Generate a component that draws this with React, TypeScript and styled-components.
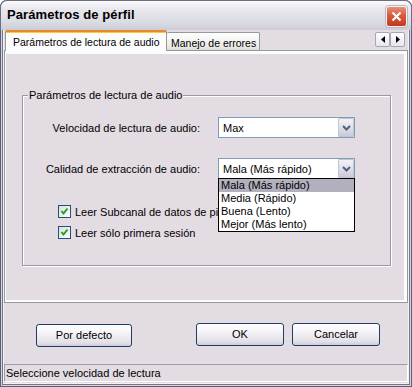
import React from "react";
import styled, { createGlobalStyle } from "styled-components";

const Global = createGlobalStyle`
  html, body { margin: 0; padding: 0; background: #ffffff; }
  body { font-family: "Liberation Sans", Arial, sans-serif; font-size: 11px; color: #000; }
  * { box-sizing: border-box; }
`;

const BG = "#e3dce3";

const Window = styled.div`
  width: 412px;
  height: 387px;
  display: flex;
  flex-direction: column;
  background: ${BG};
  border-radius: 7px 7px 0 0;
  overflow: hidden;
  box-shadow:
    inset 1px 0 #5c5e76, inset -1px 0 #5c5e76, inset 0 -1px #5c5e76,
    inset 2px 0 #d4d4de, inset -2px 0 #d4d4de, inset 0 -2px #d4d4de,
    inset 3px 0 #74768c, inset -3px 0 #74768c, inset 0 -3px #74768c,
    inset 4px 0 #f4f2f6, inset -4px 0 #f4f2f6, inset 0 -4px #f4f2f6;
`;

const TitleBar = styled.div`
  height: 30px;
  flex: none;
  display: flex;
  align-items: flex-start;
  justify-content: space-between;
  padding: 0 4px 0 6px;
  border: 1px solid #6b6d85;
  border-bottom: none;
  border-radius: 7px 7px 0 0;
  background: linear-gradient(#fbfbfd 0%, #e9e9ef 25%, #dcdce4 70%, #cdcdd8 100%);
`;

const Title = styled.div`
  font-weight: bold;
  font-size: 13px;
  line-height: 16px;
  margin-top: 6px;
  color: #000;
  letter-spacing: 0.1px;
`;

const CloseButton = styled.div`
  width: 21px;
  height: 21px;
  margin-top: 5px;
  border: 1px solid #f4f4f4;
  border-radius: 3px;
  background: linear-gradient(#e9907a 0%, #d75a40 45%, #c4381d 100%);
  box-shadow: 0 0 0 1px #b9b9c6;
  display: flex;
  align-items: center;
  justify-content: center;
`;

const Content = styled.div`
  flex: 1;
  display: flex;
  flex-direction: column;
  padding: 0 4px 5px 4px;
`;

const TabStrip = styled.div`
  height: 21px;
  margin-bottom: -1px;
  display: flex;
  align-items: flex-start;
  padding-left: 1px;
  position: relative;
  z-index: 1;
`;

const Tab = styled.div<{ $active?: boolean }>`
  height: ${(p) => (p.$active ? "21px" : "18px")};
  margin-top: ${(p) => (p.$active ? "0" : "2px")};
  width: ${(p) => (p.$active ? "162px" : "93px")};
  display: flex;
  align-items: center;
  padding-left: ${(p) => (p.$active ? "7px" : "4px")};
  padding-top: ${(p) => (p.$active ? "0" : "2px")};
  font-size: 10.5px;
  border: 1px solid #919b9c;
  border-bottom: none;
  border-left: ${(p) => (p.$active ? "1px solid #919b9c" : "none")};
  border-top: ${(p) => (p.$active ? "2px solid #e68b2c" : "1px solid #919b9c")};
  border-radius: 2px 2px 0 0;
  background: ${(p) =>
    p.$active ? "#fcfcfe" : "linear-gradient(#ffffff, #ecebe6 80%, #dcdad6)"};
  box-shadow: ${(p) => (p.$active ? "inset 0 1px #ffc73c" : "none")};
  white-space: nowrap;
  overflow: hidden;
`;

const Spacer = styled.div`
  flex: 1;
`;

const ScrollButtons = styled.div`
  display: flex;
  margin-top: 2px;
  margin-right: 3px;
`;

const ScrollButton = styled.div`
  width: 15px;
  height: 15px;
  border: 1px solid #a6a6b6;
  border-radius: 2px;
  background: linear-gradient(#ffffff, #e6e6ee);
  display: flex;
  align-items: center;
  justify-content: center;
`;

const Panel = styled.div`
  height: 253px;
  flex: none;
  border: 1px solid #919b9c;
  box-shadow: inset 1px 0 #fcfcfe, inset 0 3px #fcfcfe, inset -3px 0 #fcfcfe,
    inset 0 -2px #fcfcfe;
  padding: 44px 0 0 17px;
`;

const GroupBox = styled.div`
  width: 369px;
  height: 171px;
  border: 1px solid #9a9aa4;
  box-shadow: inset 1px 1px #ffffff, 1px 1px #ffffff;
  display: flex;
  flex-direction: column;
`;

const Legend = styled.div`
  margin: -7px 0 0 5px;
  padding: 0 1px;
  line-height: 13px;
  background: ${BG};
  width: fit-content;
`;

const FormGrid = styled.div`
  margin-top: 15px;
  display: grid;
  grid-template-columns: 177px 137px;
  grid-auto-rows: 21px;
  column-gap: 18px;
  row-gap: 20px;
  align-items: center;
`;

const Label = styled.div`
  text-align: right;
  white-space: nowrap;
`;

const ComboWrap = styled.div`
  position: relative;
  height: 21px;
`;

const Combo = styled.div`
  height: 21px;
  border: 1px solid #7f9db9;
  background: #ffffff;
  display: flex;
  align-items: center;
  padding-left: 4px;
  white-space: nowrap;
`;

const ComboText = styled.div`
  flex: 1;
`;

const ComboButton = styled.div`
  width: 16px;
  height: 19px;
  border: 1px solid #c2c4d2;
  border-radius: 1px;
  background: linear-gradient(#f2f2f6, #dcdce6 60%, #cacad6);
  display: flex;
  align-items: center;
  justify-content: center;
`;

const DropList = styled.div`
  position: absolute;
  left: 0;
  top: 20px;
  width: 137px;
  border: 1px solid #000;
  background: #ffffff;
  z-index: 2;
`;

const DropItem = styled.div<{ $selected?: boolean }>`
  height: 13px;
  line-height: 13px;
  padding-left: 2px;
  background: ${(p) => (p.$selected ? "#b2b0bc" : "#ffffff")};
  white-space: nowrap;
`;

const Checks = styled.div`
  margin-top: 22px;
  padding-left: 35px;
  display: flex;
  flex-direction: column;
`;

const CheckRow = styled.div`
  height: 21px;
  display: flex;
  align-items: center;
  gap: 4px;
  white-space: nowrap;
`;

const CheckText = styled.span`
  white-space: nowrap;
`;

const CheckBox = styled.div`
  width: 13px;
  height: 13px;
  border: 1px solid #1c5180;
  background: linear-gradient(135deg, #dcdcd7, #ffffff);
  display: flex;
  align-items: center;
  justify-content: center;
  flex: none;
`;

const ButtonRow = styled.div`
  height: 61px;
  flex: none;
  display: flex;
  align-items: flex-start;
  padding: 20px 0 0 32px;
`;

const Button = styled.div<{ $w: number; $gap: number; $dy?: number }>`
  width: ${(p) => p.$w}px;
  height: 23px;
  margin-left: ${(p) => p.$gap}px;
  margin-top: ${(p) => p.$dy || 0}px;
  border: 1px solid #1f3c6b;
  border-radius: 3px;
  background: linear-gradient(#ffffff 0%, #f4f2f6 40%, #e2dfe6 85%, #cfcbd6 100%);
  display: flex;
  align-items: center;
  justify-content: center;
  padding-bottom: 1px;
`;

const StatusBar = styled.div`
  height: 18px;
  flex: none;
  border: 1px solid;
  border-color: #9d9da6 #ffffff #ffffff #9d9da6;
  padding-left: 1px;
  display: flex;
  align-items: center;
  white-space: nowrap;
`;

const Chevron = () => (
  <svg width="9" height="6" viewBox="0 0 9 6">
    <path d="M1 1 L4.5 4.5 L8 1" fill="none" stroke="#4d6185" strokeWidth="2" />
  </svg>
);

const Check = () => (
  <svg width="9" height="9" viewBox="0 0 9 9">
    <path d="M1.5 4 L3.5 6.5 L7.5 1.5" fill="none" stroke="#21a121" strokeWidth="2" />
  </svg>
);

export default function App() {
  return (
    <>
      <Global />
      <Window>
        <TitleBar>
          <Title>Parámetros de pérfil</Title>
          <CloseButton>
            <svg width="11" height="11" viewBox="0 0 11 11">
              <path d="M1.5 1.5 L9.5 9.5 M9.5 1.5 L1.5 9.5" stroke="#ffffff" strokeWidth="2.2" />
            </svg>
          </CloseButton>
        </TitleBar>
        <Content>
          <TabStrip>
            <Tab $active>Parámetros de lectura de audio</Tab>
            <Tab>Manejo de errores</Tab>
            <Spacer />
            <ScrollButtons>
              <ScrollButton>
                <svg width="4" height="7" viewBox="0 0 4 7">
                  <path d="M4 0 L0 3.5 L4 7 Z" fill="#000" />
                </svg>
              </ScrollButton>
              <ScrollButton>
                <svg width="4" height="7" viewBox="0 0 4 7">
                  <path d="M0 0 L4 3.5 L0 7 Z" fill="#000" />
                </svg>
              </ScrollButton>
            </ScrollButtons>
          </TabStrip>
          <Panel>
            <GroupBox>
              <Legend>Parámetros de lectura de audio</Legend>
              <FormGrid>
                <Label>Velocidad de lectura de audio:</Label>
                <ComboWrap>
                  <Combo>
                    <ComboText>Max</ComboText>
                    <ComboButton>
                      <Chevron />
                    </ComboButton>
                  </Combo>
                </ComboWrap>
                <Label>Calidad de extracción de audio:</Label>
                <ComboWrap>
                  <Combo>
                    <ComboText>Mala (Más rápido)</ComboText>
                    <ComboButton>
                      <Chevron />
                    </ComboButton>
                  </Combo>
                  <DropList>
                    <DropItem $selected>Mala (Más rápido)</DropItem>
                    <DropItem>Media (Rápido)</DropItem>
                    <DropItem>Buena (Lento)</DropItem>
                    <DropItem>Mejor (Más lento)</DropItem>
                  </DropList>
                </ComboWrap>
              </FormGrid>
              <Checks>
                <CheckRow>
                  <CheckBox>
                    <Check />
                  </CheckBox>
                  <CheckText>Leer Subcanal de datos de pis</CheckText>
                </CheckRow>
                <CheckRow>
                  <CheckBox>
                    <Check />
                  </CheckBox>
                  <CheckText>Leer sólo primera sesión</CheckText>
                </CheckRow>
              </Checks>
            </GroupBox>
          </Panel>
          <ButtonRow>
            <Button $w={96} $gap={0} $dy={1}>Por defecto</Button>
            <Button $w={88} $gap={64}>OK</Button>
            <Button $w={88} $gap={8}>Cancelar</Button>
          </ButtonRow>
          <StatusBar>Seleccione velocidad de lectura</StatusBar>
        </Content>
      </Window>
    </>
  );
}
